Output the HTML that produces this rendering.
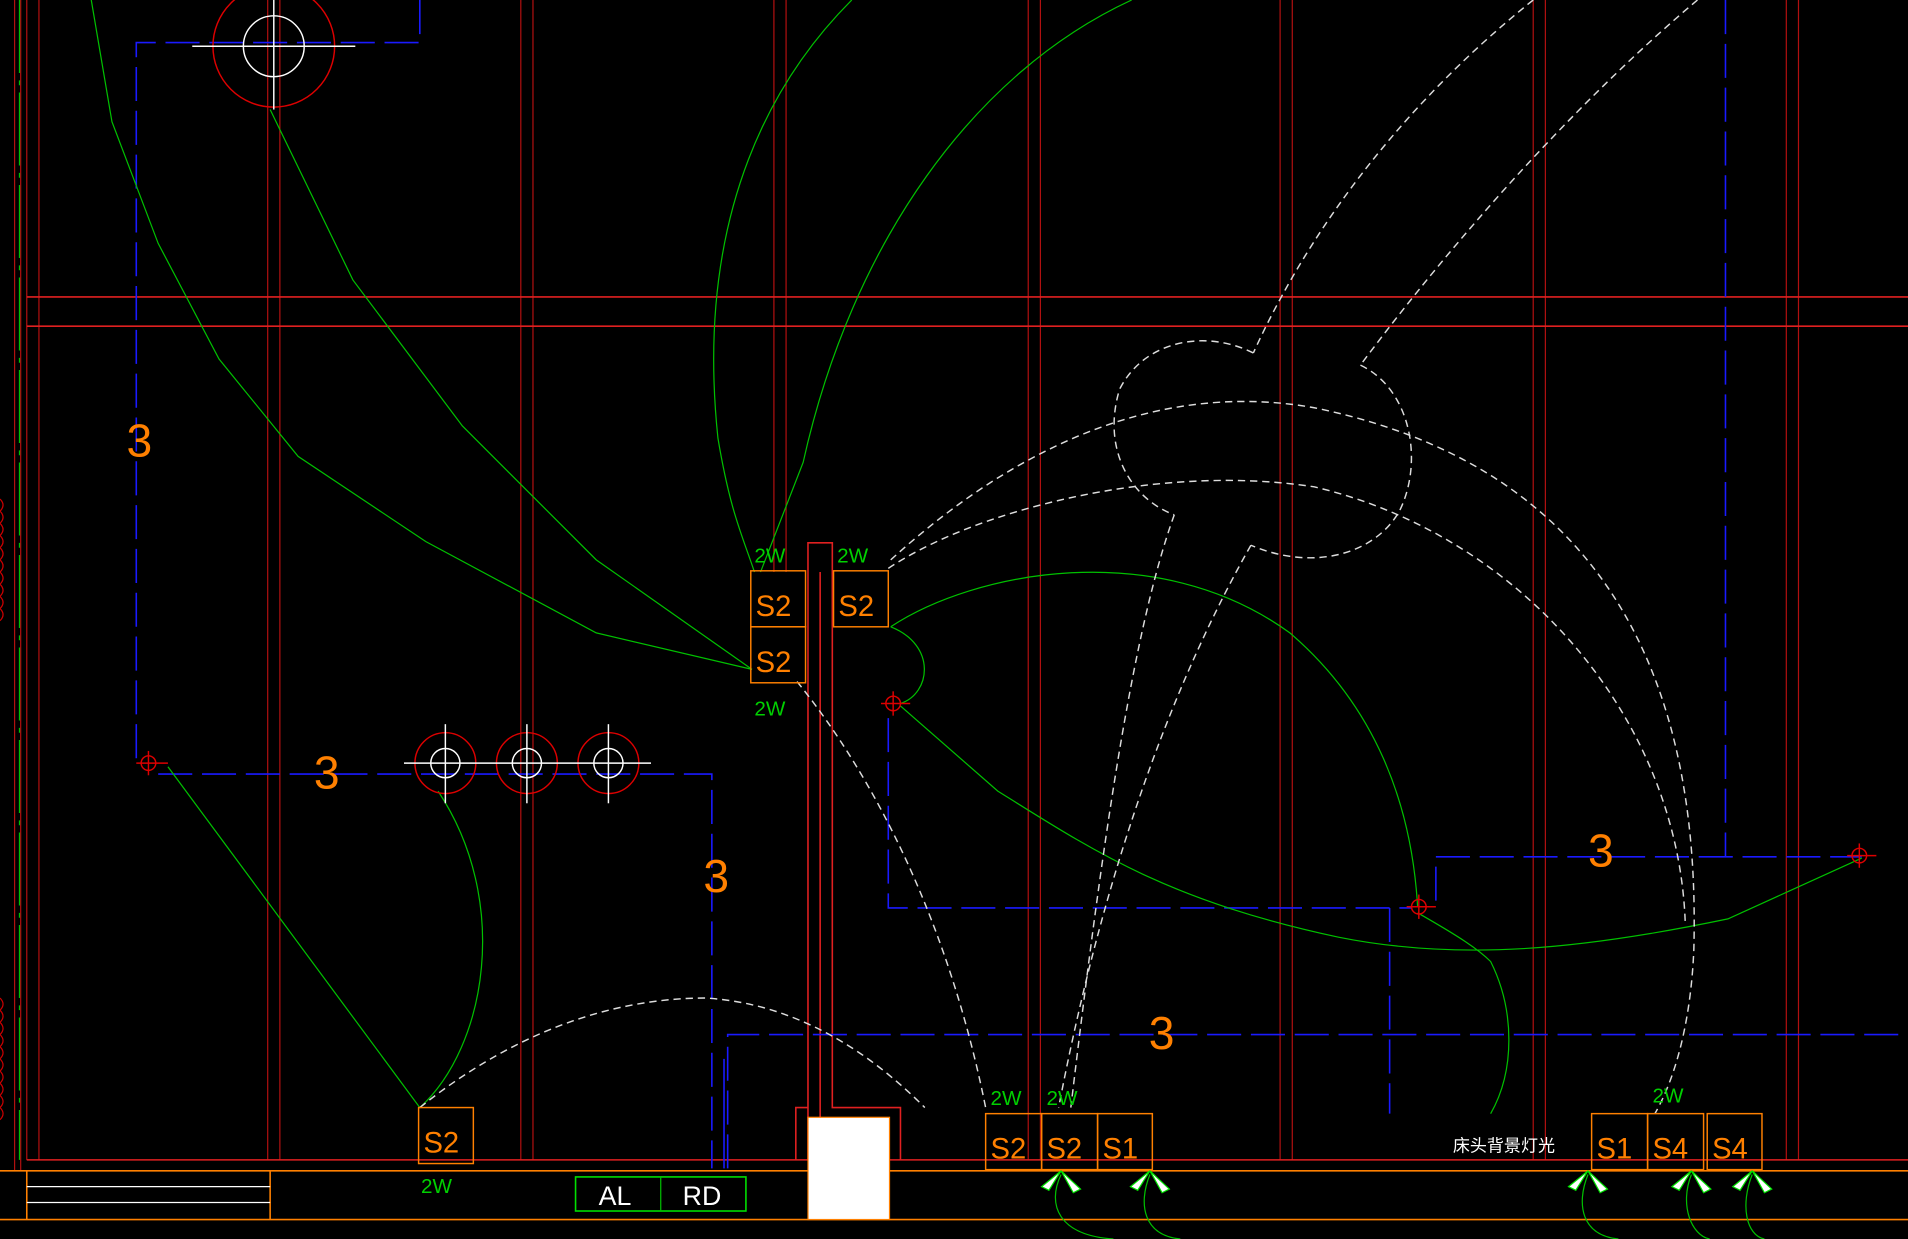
<!DOCTYPE html>
<html><head><meta charset="utf-8"><style>html,body{margin:0;padding:0;background:#000;overflow:hidden}svg{display:block}</style></head><body>
<svg width="1908" height="1239" viewBox="0 0 1568 1018" preserveAspectRatio="none" xmlns="http://www.w3.org/2000/svg" font-family="Liberation Sans, sans-serif">
<rect width="1568" height="1018" fill="#000"/>
<g stroke="#b01010" stroke-width="1" fill="none">
<line x1="12" y1="0" x2="12" y2="962"/><line x1="17" y1="0" x2="17" y2="962"/>
<line x1="22" y1="0" x2="22" y2="953"/><line x1="32" y1="0" x2="32" y2="953"/>
<line x1="220" y1="0" x2="220" y2="953"/><line x1="230" y1="0" x2="230" y2="953"/>
<line x1="428" y1="0" x2="428" y2="953"/><line x1="438" y1="0" x2="438" y2="953"/>
<line x1="636" y1="0" x2="636" y2="470"/><line x1="646" y1="0" x2="646" y2="470"/>
<line x1="845" y1="0" x2="845" y2="953"/><line x1="855" y1="0" x2="855" y2="953"/>
<line x1="1052" y1="0" x2="1052" y2="953"/><line x1="1062" y1="0" x2="1062" y2="953"/>
<line x1="1260" y1="0" x2="1260" y2="953"/><line x1="1270" y1="0" x2="1270" y2="953"/>
<line x1="1468" y1="0" x2="1468" y2="953"/><line x1="1478" y1="0" x2="1478" y2="953"/>
</g>
<g stroke="#e02020" stroke-width="1.3" fill="none">
<line x1="22" y1="244" x2="1568" y2="244"/><line x1="22" y1="268" x2="1568" y2="268"/>
<line x1="22" y1="953" x2="1568" y2="953"/>
<polyline points="664,953 664,446 684,446 684,910 740,910 740,953"/>
<polyline points="654,953 654,910 664,910"/>
<line x1="674" y1="470" x2="674" y2="953"/>
</g>
<g stroke="#ff8000" stroke-width="1.3" fill="none">
<line x1="0" y1="962" x2="1568" y2="962"/><line x1="0" y1="1002" x2="1568" y2="1002"/>
<line x1="22" y1="962" x2="22" y2="1002"/><line x1="222" y1="962" x2="222" y2="1002"/>
</g>
<line x1="22" y1="975" x2="222" y2="975" stroke="#fff"/><line x1="22" y1="988" x2="222" y2="988" stroke="#fff"/>
<rect x="664" y="918" width="67" height="84" fill="#fff" stroke="#ff8000"/>
<g stroke="#1a1aff" stroke-width="1.3" fill="none" stroke-dasharray="28,8">
<polyline points="345,0 345,35 112,35 112,628"/>
<polyline points="130,636 585,636 585,960"/>
<line x1="595" y1="870" x2="595" y2="960" stroke-dasharray="none"/>
<polyline points="598,960 598,850 1568,850"/>
<polyline points="730,590 730,746 1160,746"/>
<line x1="1142" y1="746" x2="1142" y2="915"/>
<polyline points="1180,740 1180,704 1530,704"/>
<line x1="1418" y1="0" x2="1418" y2="704"/>
</g>
<g stroke="#00c000" stroke-width="1" fill="none">
<line x1="16" y1="0" x2="16" y2="953" stroke-dasharray="60,6,4,6"/>
<path d="M75,0 L92,100 L130,200 L180,295 L245,375 L350,445 L490,520 L618,550"/>
<path d="M222,90 L290,230 L380,350 L490,460 L618,550"/>
<path d="M700,0 C640,60 570,170 590,360 C600,420 610,440 620,470"/>
<path d="M930,0 C800,60 700,200 660,380 L625,470"/>
<path d="M732,515 C800,470 950,440 1060,520 C1130,580 1160,660 1165,745"/>
<path d="M732,515 C770,530 765,570 740,578"/>
<path d="M740,580 L820,650 C900,700 960,740 1100,770 C1200,790 1300,780 1420,755 L1530,705"/>
<path d="M1165,750 C1200,770 1215,780 1225,790 C1245,830 1245,880 1225,915"/>
<path d="M138,630 L345,910 C400,860 420,740 360,650"/>
<path d="M872,965 C860,990 870,1015 915,1018"/><path d="M945,965 C935,990 940,1015 970,1018"/>
<path d="M1305,965 C1295,990 1300,1015 1330,1018"/><path d="M1390,965 C1380,990 1390,1015 1405,1018"/><path d="M1440,965 C1430,990 1435,1015 1450,1018"/>
</g>
<g fill="#fff" stroke="#00e000" stroke-width="1">
<path d="M872,962 L856,975 L862,978 Z"/><path d="M872,962 L882,980 L888,977 Z"/>
<path d="M945,962 L929,975 L935,978 Z"/><path d="M945,962 L955,980 L961,977 Z"/>
<path d="M1305,962 L1289,975 L1295,978 Z"/><path d="M1305,962 L1315,980 L1321,977 Z"/>
<path d="M1390,962 L1374,975 L1380,978 Z"/><path d="M1390,962 L1400,980 L1406,977 Z"/>
<path d="M1440,962 L1424,975 L1430,978 Z"/><path d="M1440,962 L1450,980 L1456,977 Z"/>
</g>
<g stroke="#ddd" stroke-width="1.2" fill="none" stroke-dasharray="6,4">
<path d="M1260,0 C1160,80 1080,180 1030,290"/>
<path d="M1395,0 C1300,80 1200,190 1118,300"/>
<path d="M1030,290 C990,270 940,280 920,320 C905,370 930,410 965,423"/>
<path d="M1118,300 C1160,320 1170,380 1150,420 C1130,455 1080,470 1028,448"/>
<path d="M965,423 C930,520 905,700 880,910"/>
<path d="M1028,448 C970,550 910,700 870,910"/>
<path d="M732,460 C820,380 940,310 1080,335 C1250,370 1400,480 1392,780 C1390,830 1380,880 1360,915"/>
<path d="M655,560 C720,640 780,760 810,910"/>
<path d="M730,467 C800,420 950,380 1080,400 C1250,440 1380,590 1385,760"/>
<path d="M345,910 C420,850 500,820 580,820 C660,825 720,870 760,910"/>
</g>
<g stroke="#dd0000" fill="none" stroke-width="1.2">
<circle cx="225" cy="38" r="50"/><circle cx="366" cy="627" r="25"/><circle cx="433" cy="627" r="25"/><circle cx="500" cy="627" r="25"/>
<circle cx="122" cy="627" r="6"/><line x1="112" y1="627" x2="138" y2="627"/><line x1="122" y1="617" x2="122" y2="637"/>
<circle cx="734" cy="578" r="6"/><line x1="724" y1="578" x2="748" y2="578"/><line x1="734" y1="568" x2="734" y2="588"/>
<circle cx="1166" cy="745" r="6"/><line x1="1156" y1="745" x2="1180" y2="745"/><line x1="1166" y1="735" x2="1166" y2="755"/>
<circle cx="1528" cy="703" r="6"/><line x1="1518" y1="703" x2="1542" y2="703"/><line x1="1528" y1="693" x2="1528" y2="713"/>
</g>
<g stroke="#fff" fill="none" stroke-width="1.2">
<circle cx="225" cy="38" r="25"/><line x1="158" y1="38" x2="292" y2="38"/><line x1="225" y1="0" x2="225" y2="90"/>
<circle cx="366" cy="627" r="12"/><circle cx="433" cy="627" r="12"/><circle cx="500" cy="627" r="12"/>
<line x1="332" y1="627" x2="535" y2="627"/>
<line x1="366" y1="595" x2="366" y2="660"/><line x1="433" y1="595" x2="433" y2="660"/><line x1="500" y1="595" x2="500" y2="660"/>
</g>
<g stroke="#ff8000" fill="none" stroke-width="1.2">
<rect x="617" y="469" width="45" height="46"/><rect x="617" y="515" width="45" height="46"/><rect x="685" y="469" width="45" height="46"/>
<rect x="344" y="910" width="45" height="46"/>
<rect x="810" y="915" width="46" height="46"/><rect x="856" y="915" width="46" height="46"/><rect x="902" y="915" width="45" height="46"/>
<rect x="1308" y="915" width="46" height="46"/><rect x="1354" y="915" width="46" height="46"/><rect x="1403" y="915" width="45" height="46"/>
</g>
<g fill="#ff8000" font-size="24" font-weight="300">
<text x="621" y="506">S2</text><text x="621" y="552">S2</text><text x="689" y="506">S2</text><text x="348" y="947">S2</text>
<text x="814" y="952">S2</text><text x="860" y="952">S2</text><text x="906" y="952">S1</text>
<text x="1312" y="952">S1</text><text x="1358" y="952">S4</text><text x="1407" y="952">S4</text>
<text x="104" y="375" font-size="38">3</text><text x="258" y="648" font-size="38">3</text><text x="578" y="733" font-size="38">3</text>
<text x="944" y="862" font-size="38">3</text><text x="1305" y="712" font-size="38">3</text>
</g>
<g fill="#00d000" font-size="17">
<text x="620" y="462">2W</text><text x="688" y="462">2W</text><text x="620" y="588">2W</text><text x="346" y="980">2W</text>
<text x="814" y="908">2W</text><text x="860" y="908">2W</text><text x="1358" y="906">2W</text>
</g>
<text x="1194" y="946" fill="#fff" font-size="14" font-family="Liberation Sans, Noto Sans CJK SC, sans-serif">床头背景灯光</text>
<rect x="473" y="967" width="140" height="28" fill="none" stroke="#00e000" stroke-width="1.3"/>
<line x1="543" y1="967" x2="543" y2="995" stroke="#00c000"/>
<text x="492" y="990" fill="#fff" font-size="22">AL</text><text x="561" y="990" fill="#fff" font-size="22">RD</text>
<g stroke="#c00" fill="none"><path d="M0,410 q5,5 0,10 q5,5 0,10 q5,5 0,10 q5,5 0,10 q5,5 0,10 q5,5 0,10 q5,5 0,10 q5,5 0,10 q5,5 0,10 q5,5 0,10"/><path d="M0,820 q5,5 0,10 q5,5 0,10 q5,5 0,10 q5,5 0,10 q5,5 0,10 q5,5 0,10 q5,5 0,10 q5,5 0,10 q5,5 0,10 q5,5 0,10"/></g>
</svg>
</body></html>
